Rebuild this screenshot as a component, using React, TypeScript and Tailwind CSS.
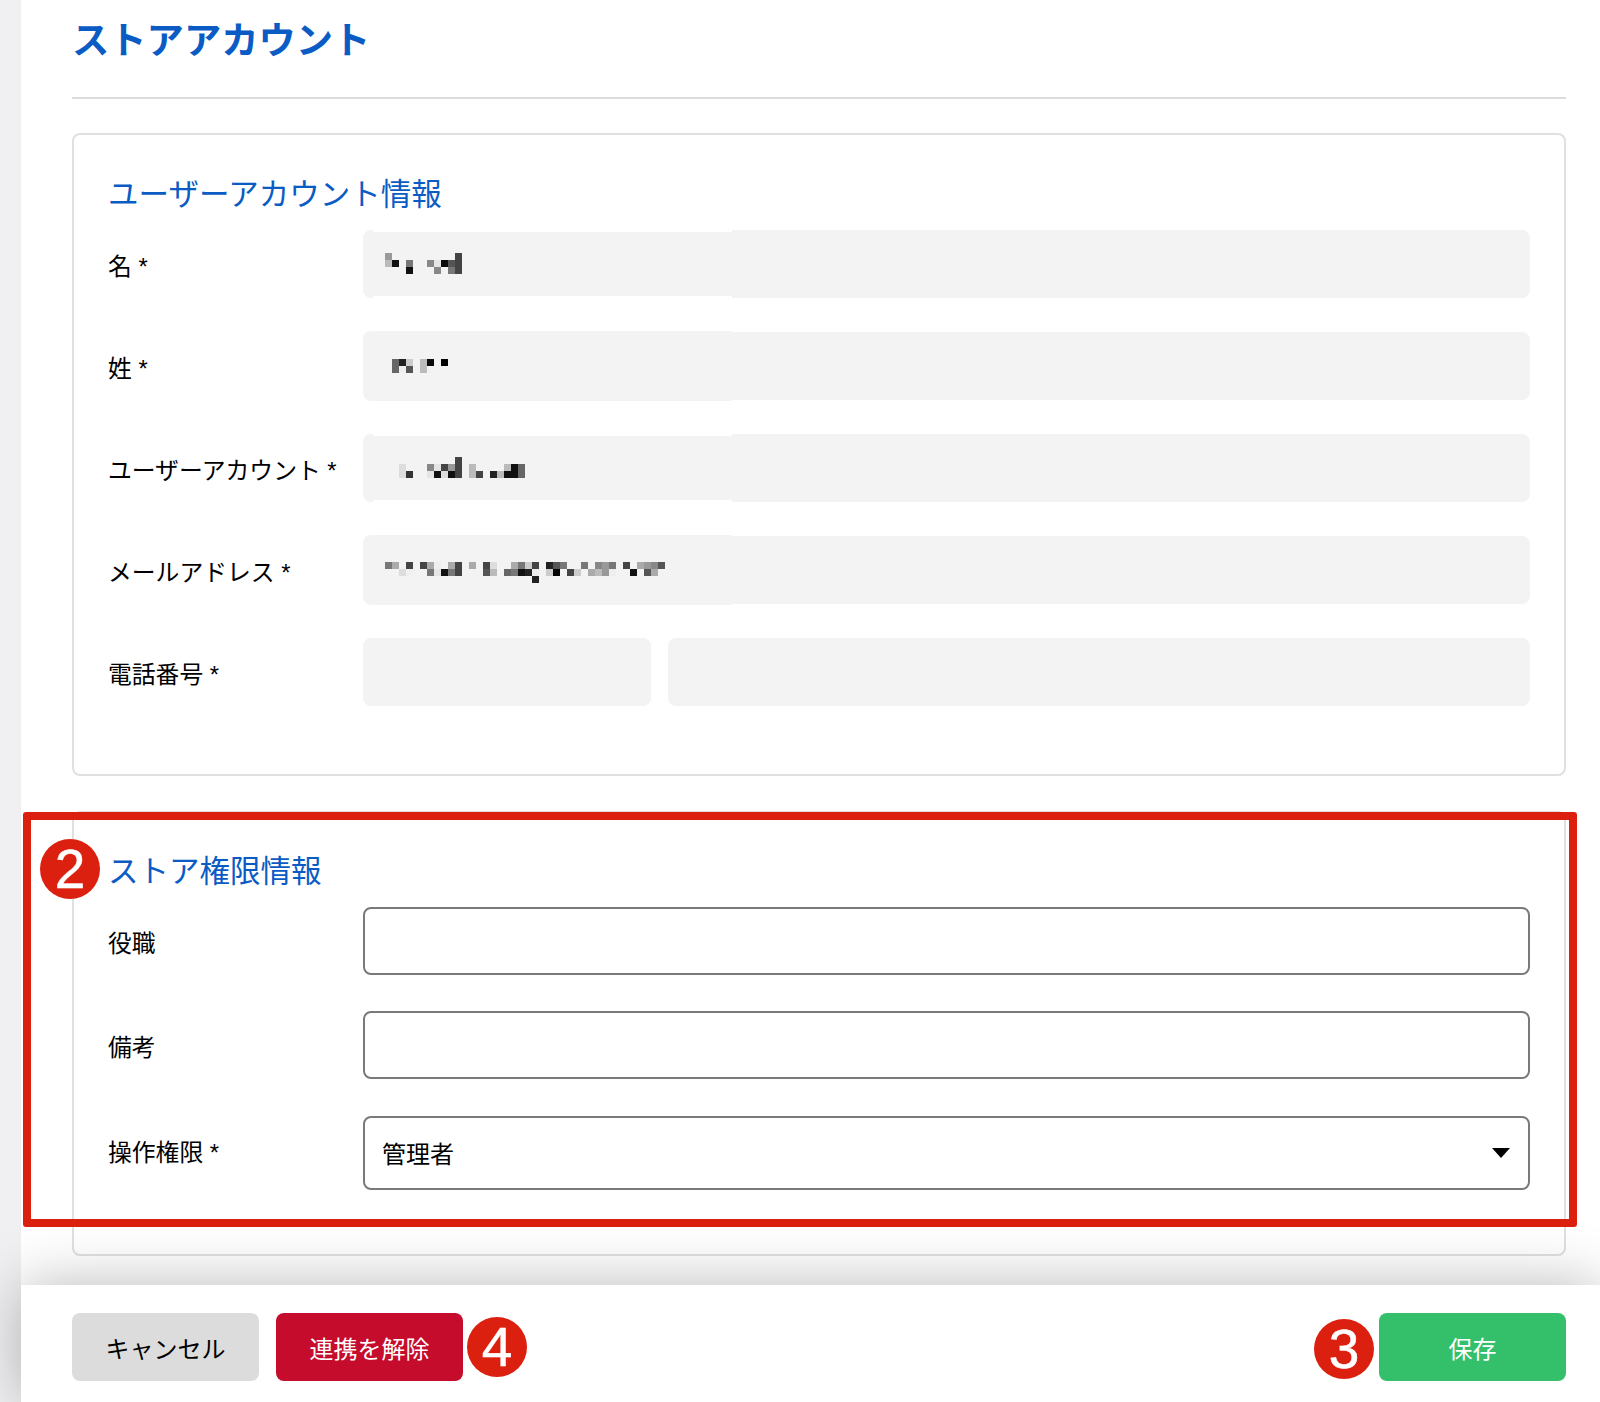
import React from 'react';

type Cell = [number, number, string];

const BLUE = 'text-[#0a5cc4]';

// pixelated (mosaicked) values, one cell = 7px
const firstName: Cell[] = [
  [0, 0, '#999'], [10, 0, '#444'],
  [0, 1, '#bbb'], [1, 1, '#111'], [3, 1, '#777'], [6, 1, '#888'], [7, 1, '#e5e5e5'], [8, 1, '#0a0a0a'], [9, 1, '#555'], [10, 1, '#444'],
  [3, 2, '#111'], [7, 2, '#888'], [9, 2, '#777'], [10, 2, '#444'],
];
const lastName: Cell[] = [
  [0, 0, '#666'], [1, 0, '#222'], [2, 0, '#ccc'], [4, 0, '#bbb'], [5, 0, '#0a0a0a'], [7, 0, '#000'],
  [0, 1, '#666'], [1, 1, '#eee'], [2, 1, '#555'], [4, 1, '#bbb'],
];
const account: Cell[] = [
  [8, 0, '#444'],
  [0, 1, '#ddd'], [4, 1, '#888'], [5, 1, '#e5e5e5'], [6, 1, '#444'], [7, 1, '#999'], [8, 1, '#444'], [10, 1, '#bbb'], [15, 1, '#bbb'], [16, 1, '#111'], [17, 1, '#666'],
  [0, 2, '#ddd'], [1, 2, '#333'], [4, 2, '#e5e5e5'], [5, 2, '#111'], [6, 2, '#ddd'], [7, 2, '#111'], [8, 2, '#444'], [10, 2, '#bbb'], [11, 2, '#444'], [13, 2, '#222'], [14, 2, '#bbb'], [15, 2, '#111'], [16, 2, '#111'], [17, 2, '#666'],
];
const email: Cell[] = [
  [0, 0, '#777'], [1, 0, '#aaa'], [3, 0, '#444'], [5, 0, '#444'], [6, 0, '#aaa'], [7, 0, '#eee'], [9, 0, '#aaa'], [10, 0, '#444'], [12, 0, '#aaa'], [14, 0, '#444'], [15, 0, '#ddd'], [18, 0, '#aaa'], [19, 0, '#777'], [20, 0, '#ccc'], [21, 0, '#444'], [23, 0, '#222'], [24, 0, '#555'], [25, 0, '#777'], [28, 0, '#777'], [30, 0, '#888'], [31, 0, '#999'], [32, 0, '#777'], [34, 0, '#444'], [36, 0, '#aaa'], [37, 0, '#999'], [38, 0, '#888'], [39, 0, '#555'],
  [2, 1, '#ddd'], [3, 1, '#f0f0f0'], [6, 1, '#777'], [7, 1, '#e5e5e5'], [8, 1, '#111'], [9, 1, '#777'], [10, 1, '#444'], [14, 1, '#555'], [15, 1, '#bbb'], [17, 1, '#666'], [18, 1, '#777'], [19, 1, '#111'], [20, 1, '#222'], [21, 1, '#eee'], [23, 1, '#ccc'], [24, 1, '#000'], [26, 1, '#444'], [27, 1, '#ccc'], [29, 1, '#aaa'], [30, 1, '#bbb'], [31, 1, '#999'], [32, 1, '#eee'], [35, 1, '#111'], [37, 1, '#555'], [38, 1, '#aaa'],
  [21, 2, '#222'],
];

function Mosaic({ cells }: { cells: Cell[] }) {
  return (
    <svg width="280" height="21" className="relative block overflow-visible" shapeRendering="crispEdges">
      {cells.map(([c, r, fill]) => (
        <rect key={c + '-' + r} x={c * 7} y={r * 7} width="7" height="7" fill={fill} />
      ))}
    </svg>
  );
}

function Label({ children, plain }: { children: React.ReactNode; plain?: boolean }) {
  return <div className={'w-[255px] shrink-0 text-[23.8px] leading-[34px] text-black ' + (plain ? '' : 'pt-[6px]')}>{children}</div>;
}

function ReadOnlyField({ label, cells, patch, pad }: { label: string; cells: Cell[]; patch: 'inset' | 'outset'; pad: string }) {
  return (
    <div className="flex items-center">
      <Label>{label}</Label>
      <div className={'relative h-[68px] flex-1 rounded-lg bg-[#f3f3f3] ' + pad}>
        {patch === 'inset' ? (
          <>
            <div className="absolute left-[10px] top-0 h-[2px] w-[359px] bg-white" />
            <div className="absolute bottom-0 left-[10px] h-[2px] w-[359px] bg-white" />
          </>
        ) : (
          <div className="absolute -bottom-px -top-px left-0 w-[369px] rounded-l-lg rounded-r-[2px] bg-[#f3f3f3]" />
        )}
        <Mosaic cells={cells} />
      </div>
    </div>
  );
}

function Badge({ n, className }: { n: number; className: string }) {
  return (
    <div className={'absolute z-30 flex h-[60px] w-[60px] items-center justify-center rounded-full bg-[#dc200f] text-[55px] leading-none text-white [-webkit-text-stroke:0.5px_white] ' + className}>
      {n}
    </div>
  );
}

export default function App() {
  return (
    <div className="relative flex h-[1402px] w-[1600px] overflow-hidden bg-white font-['Liberation_Sans','Noto_Sans_CJK_JP',sans-serif]">
      <div className="w-[21px] shrink-0 bg-[#f0f0f2]" />

      <div className="flex min-w-0 flex-1 flex-col">
        <div className="flex-1 overflow-hidden pl-[51px] pr-[34px]">
          <div className="h-[99px] border-b-2 border-[#dcdcdc]">
            <h1 className={'pt-[16px] text-[37.3px] font-bold leading-[50px] ' + BLUE}>ストアアカウント</h1>
          </div>

          <section className="mt-[34px] h-[643px] rounded-lg border-2 border-[#e0e0e0] px-[34px] pt-[39px]">
            <h2 className={'mb-[16px] text-[30.5px] leading-[40px] ' + BLUE}>ユーザーアカウント情報</h2>
            <div className="flex flex-col gap-[34px]">
              <ReadOnlyField label="名 *" cells={firstName} patch="inset" pad="pl-[22px] pt-[23px]" />
              <ReadOnlyField label="姓 *" cells={lastName} patch="outset" pad="pl-[29px] pt-[27px]" />
              <ReadOnlyField label="ユーザーアカウント *" cells={account} patch="inset" pad="pl-[36px] pt-[23px]" />
              <ReadOnlyField label="メールアドレス *" cells={email} patch="outset" pad="pl-[22px] pt-[26px]" />
              <div className="flex items-center">
                <Label>電話番号 *</Label>
                <div className="flex flex-1 gap-[17px]">
                  <div className="h-[68px] w-[288px] rounded-lg bg-[#f3f3f3]" />
                  <div className="h-[68px] flex-1 rounded-lg bg-[#f3f3f3]" />
                </div>
              </div>
            </div>
          </section>

          <section className="mt-[35px] h-[445px] rounded-lg border-2 border-[#e0e0e0] px-[34px] pt-[38px]">
            <h2 className={'mb-[16px] text-[30.5px] leading-[40px] ' + BLUE}>ストア権限情報</h2>
            <div className="flex items-center">
              <Label>役職</Label>
              <input readOnly className="h-[68px] flex-1 rounded-lg border-2 border-[#7a7a7a] bg-white" />
            </div>
            <div className="mt-[36px] flex items-center">
              <Label>備考</Label>
              <input readOnly className="h-[68px] flex-1 rounded-lg border-2 border-[#7a7a7a] bg-white" />
            </div>
            <div className="mt-[37px] flex items-center">
              <Label plain>操作権限 *</Label>
              <div className="flex h-[74px] flex-1 items-center justify-between rounded-lg border-2 border-[#7a7a7a] bg-white pl-[17px] pr-[18px] text-[24px] text-black">
                <span className="pt-[4px]">管理者</span>
                <svg width="18" height="10" viewBox="0 0 18 10">
                  <path d="M0 0h18L9 10z" fill="#000" />
                </svg>
              </div>
            </div>
          </section>
        </div>

        <footer className="relative z-10 flex h-[117px] shrink-0 items-start justify-between bg-white pl-[51px] pr-[34px] pt-[28px] shadow-[0_0_60px_rgba(0,0,0,0.28)]">
          <div className="flex gap-[17px]">
            <button className="h-[68px] w-[187px] rounded-lg bg-[#dcdcdc] pt-[5px] text-[24px] text-black">キャンセル</button>
            <button className="h-[68px] w-[187px] rounded-lg bg-[#c60c2c] pt-[5px] text-[24px] text-white">連携を解除</button>
          </div>
          <button className="h-[68px] w-[187px] rounded-lg bg-[#34c06a] pt-[5px] text-[24px] text-white">保存</button>
        </footer>
      </div>

      {/* annotations laid over the screenshot */}
      <div className="absolute left-[23px] top-[812px] z-20 h-[415px] w-[1554px] rounded-[3px] border-8 border-[#dc200f]" />
      <Badge n={2} className="left-[40px] top-[839px]" />
      <Badge n={4} className="left-[467px] top-[1317px]" />
      <Badge n={3} className="left-[1314px] top-[1319px]" />
    </div>
  );
}
